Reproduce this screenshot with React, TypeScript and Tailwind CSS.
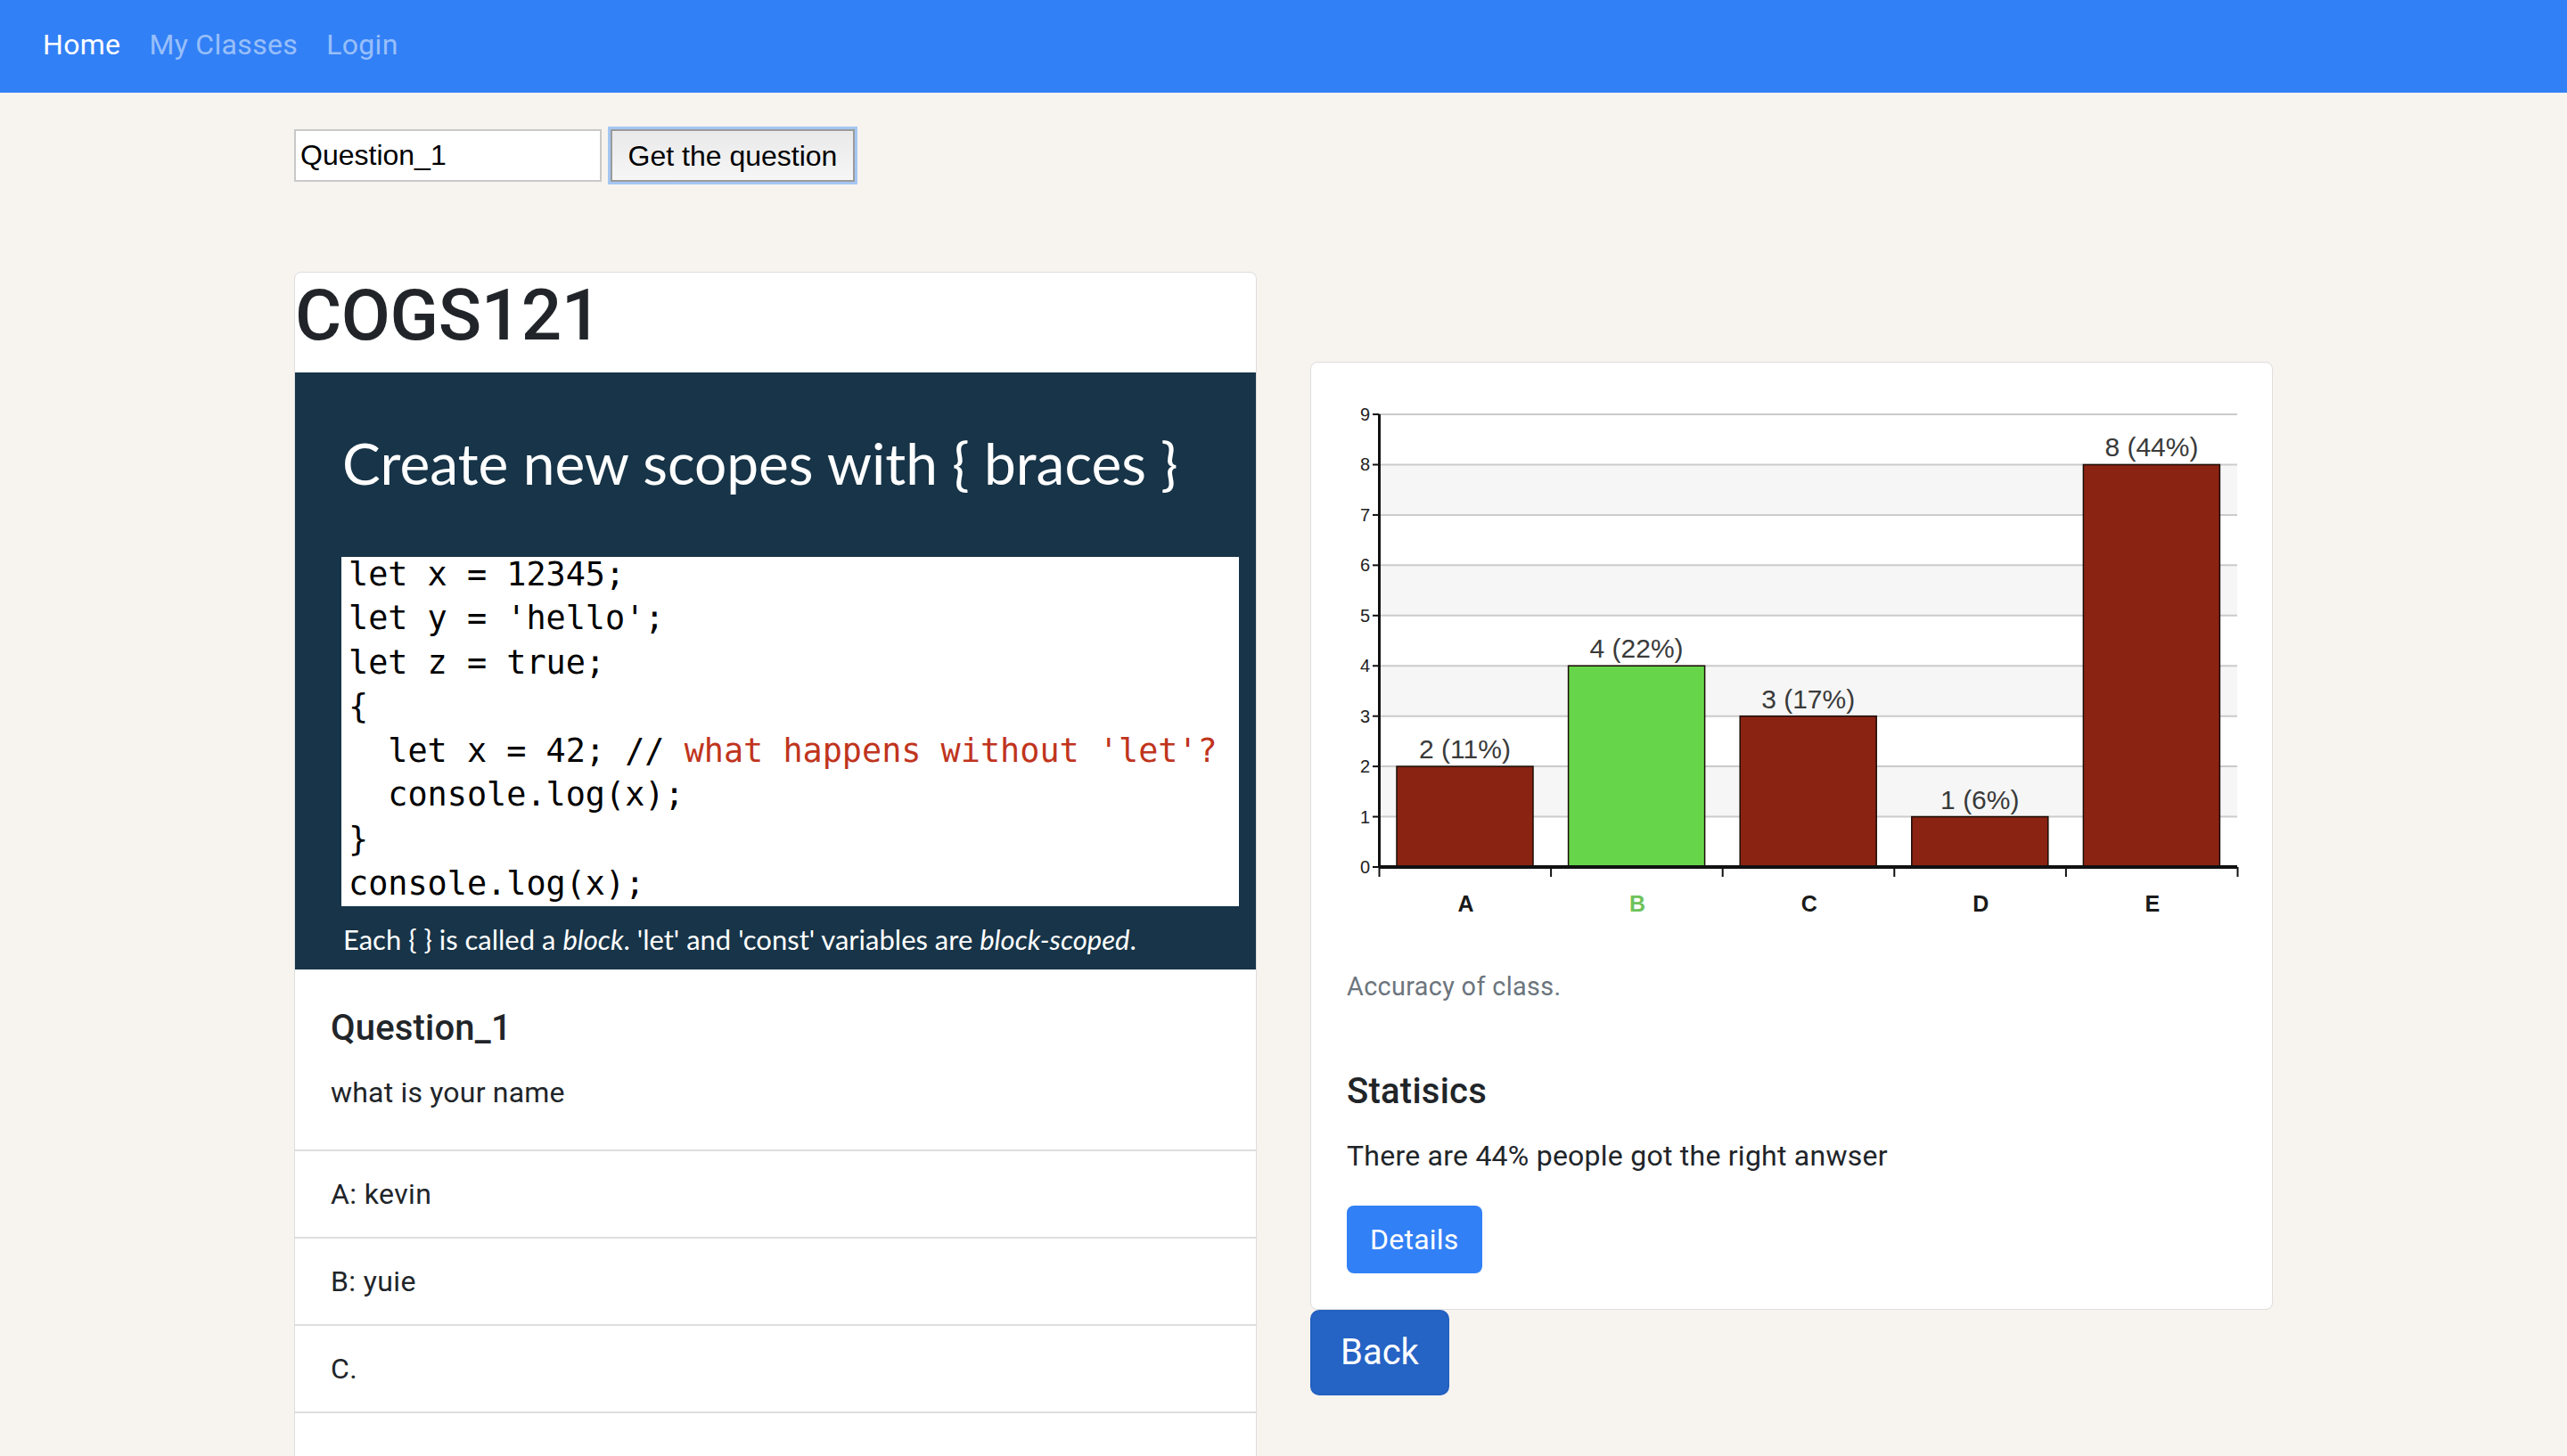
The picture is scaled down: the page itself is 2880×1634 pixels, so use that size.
import React from "react";

const bars = [
  { label: "A", value: 2, pct: "2 (11%)", correct: false },
  { label: "B", value: 4, pct: "4 (22%)", correct: true },
  { label: "C", value: 3, pct: "3 (17%)", correct: false },
  { label: "D", value: 1, pct: "1 (6%)", correct: false },
  { label: "E", value: 8, pct: "8 (44%)", correct: false },
];

const codeLines: React.ReactNode[] = [
  "let x = 12345;",
  "let y = 'hello';",
  "let z = true;",
  "{",
  <>
    {"  let x = 42; // "}
    <span className="text-[#c0341d]">what happens without 'let'?</span>
  </>,
  "  console.log(x);",
  "}",
  "console.log(x);",
];

// chart geometry, in px inside the figure
const axisX = 76.5;
const rightX = 1039;
const zeroY = 566;
const unit = 56.44;
const slot = 192.6;

const AccuracyChart = () => {
  const levels = [0, 1, 2, 3, 4, 5, 6, 7, 8, 9];
  return (
    <svg width="1078" height="679" viewBox="0 0 1078 679" className="block">
      {/* shaded bands */}
      {[1, 3, 5, 7].map((lv) => (
        <rect
          key={lv}
          x={axisX + 2}
          y={zeroY - (lv + 1) * unit}
          width={rightX - axisX - 2}
          height={unit}
          fill="#f6f6f6"
        />
      ))}
      {levels.slice(1).map((lv) => (
        <line
          key={lv}
          x1={axisX}
          x2={rightX}
          y1={zeroY - lv * unit}
          y2={zeroY - lv * unit}
          stroke="#cbcbcb"
          strokeWidth="2"
        />
      ))}
      {levels.map((lv) => (
        <g key={lv}>
          <line x1={69} x2={axisX} y1={zeroY - lv * unit} y2={zeroY - lv * unit} stroke="#111" strokeWidth="2" />
          <text
            x={66}
            y={zeroY - lv * unit + 7}
            textAnchor="end"
            fontSize="20"
            fill="#222"
            fontFamily="Liberation Sans, Arial, sans-serif"
          >
            {lv}
          </text>
        </g>
      ))}

      {bars.map((b, i) => {
        const x = 96 + i * slot;
        const top = zeroY - b.value * unit;
        const cx = x + 76.5;
        return (
          <g key={b.label}>
            <rect
              x={x}
              y={top}
              width={153}
              height={zeroY - top}
              fill={b.correct ? "#66d54a" : "#8b2312"}
              stroke="#1c0c06"
              strokeWidth="1.5"
            />
            <text
              x={cx}
              y={top - 9}
              textAnchor="middle"
              fontSize="30"
              fill="#3a3a3a"
              fontFamily="Liberation Sans, Arial, sans-serif"
            >
              {b.pct}
            </text>
            <text
              x={cx + 1}
              y={616}
              textAnchor="middle"
              fontSize="25"
              fontWeight="700"
              fill={b.correct ? "#6fc25a" : "#1a1a1a"}
              fontFamily="Liberation Sans, Arial, sans-serif"
            >
              {b.label}
            </text>
          </g>
        );
      })}

      {/* axes */}
      <line x1={axisX} x2={axisX} y1={zeroY - 9 * unit} y2={zeroY + 1} stroke="#111" strokeWidth="3" />
      <line x1={axisX} x2={rightX} y1={zeroY} y2={zeroY} stroke="#111" strokeWidth="4" />
      {[0, 1, 2, 3, 4, 5].map((k) => (
        <line
          key={k}
          x1={axisX + k * slot}
          x2={axisX + k * slot}
          y1={zeroY}
          y2={zeroY + 11}
          stroke="#111"
          strokeWidth="2"
        />
      ))}
    </svg>
  );
};

export default function App() {
  return (
    <div className="min-h-screen bg-[#f7f3ef] font-['Roboto',sans-serif] text-[#212529]">
      {/* Navbar */}
      <nav className="h-[104px] bg-[#3280f6] flex items-center px-[32px] pb-[5px] text-[32px] leading-[48px] tracking-[0.01em]">
        <a className="px-[16px] text-white">Home</a>
        <a className="px-[16px] text-white/50">My Classes</a>
        <a className="px-[16px] text-white/50">Login</a>
      </nav>

      <div className="w-[2220px] mx-auto">
        {/* Question lookup */}
        <form className="mt-[41px] flex items-center font-['Liberation_Sans',Arial,sans-serif]">
          <input
            defaultValue="Question_1"
            className="w-[345px] h-[59px] bg-white border-2 border-[#c9c9c9] px-[5px] text-[32px] text-black outline-none"
          />
          <button
            type="button"
            className="ml-[10px] w-[274px] h-[59px] border-2 border-[#9b9b9b] bg-gradient-to-b from-[#e9e9e9] to-[#f6f6f6] text-[32px] text-black ring-[3px] ring-[#a4c6f2]"
          >
            Get the question
          </button>
        </form>

        <div className="mt-[101px] flex items-start gap-[60px]">
          {/* Left: question card */}
          <div className="w-[1080px] bg-white border border-[#dedede] rounded-[8px] overflow-hidden">
            <h1 className="text-[80px] leading-[96px] font-medium mb-[16px] tracking-[-0.005em]">COGS121</h1>

            <div className="h-[670px] bg-[#173448] text-white font-['Lato',sans-serif]">
              <div className="h-[207px] pl-[53px] pt-[69px] text-[64px] leading-[66px]">
                Create new scopes with {"{"} braces {"}"}
              </div>
              <div className="ml-[52px] w-[1007px] h-[392px] bg-white text-black pl-[8px]">
                <pre className="font-['DejaVu_Sans_Mono',monospace] text-[36.8px] leading-[49.6px]">
                  {codeLines.map((line, i) => (
                    <div key={i} className={i === 0 ? "leading-[40px] mb-[4px]" : ""}>
                      {line}
                    </div>
                  ))}
                </pre>
              </div>
              <p className="ml-[54px] mt-[17px] text-[31px] leading-[40px]">
                Each {"{ }"} is called a <i>block</i>. 'let' and 'const' variables are <i>block-scoped</i>.
              </p>
            </div>

            <div className="p-[40px] pt-[42px] tracking-[0.012em]">
              <h5 className="text-[40px] leading-[48px] font-medium mb-[24px]">Question_1</h5>
              <p className="text-[32px] leading-[48px]">what is your name</p>
            </div>

            <ul className="text-[32px] leading-[48px] tracking-[0.012em]">
              {["A: kevin", "B: yuie", "C.", "\u00a0"].map((opt, i) => (
                <li key={i} className="border-t-2 border-[#dedede] px-[40px] py-[24px]">
                  {opt}
                </li>
              ))}
            </ul>
          </div>

          {/* Right: statistics */}
          <div className="w-[1080px] mt-[101px]">
            <div className="bg-white border border-[#dedede] rounded-[8px] overflow-hidden">
              <figure className="mb-[32px]">
                <AccuracyChart />
                <figcaption className="px-[40px] text-[28.8px] leading-[43.2px] text-[#6c757d] tracking-[0.012em]">
                  Accuracy of class.
                </figcaption>
              </figure>
              <div className="px-[40px] pt-[40px] pb-[40px] tracking-[0.015em]">
                <h5 className="text-[40px] leading-[48px] font-medium mb-[24px]">Statisics</h5>
                <p className="text-[32px] leading-[48px] mb-[32px]">There are 44% people got the right anwser</p>
                <button className="bg-[#3280f6] text-white text-[32px] leading-[48px] px-[24px] py-[12px] border-2 border-transparent rounded-[8px]">
                  Details
                </button>
              </div>
            </div>
            <button className="bg-[#2563c5] text-white text-[40px] leading-[60px] px-[32px] py-[16px] border-2 border-[#2360c0] rounded-[10px]">
              Back
            </button>
          </div>
        </div>
      </div>
    </div>
  );
}
